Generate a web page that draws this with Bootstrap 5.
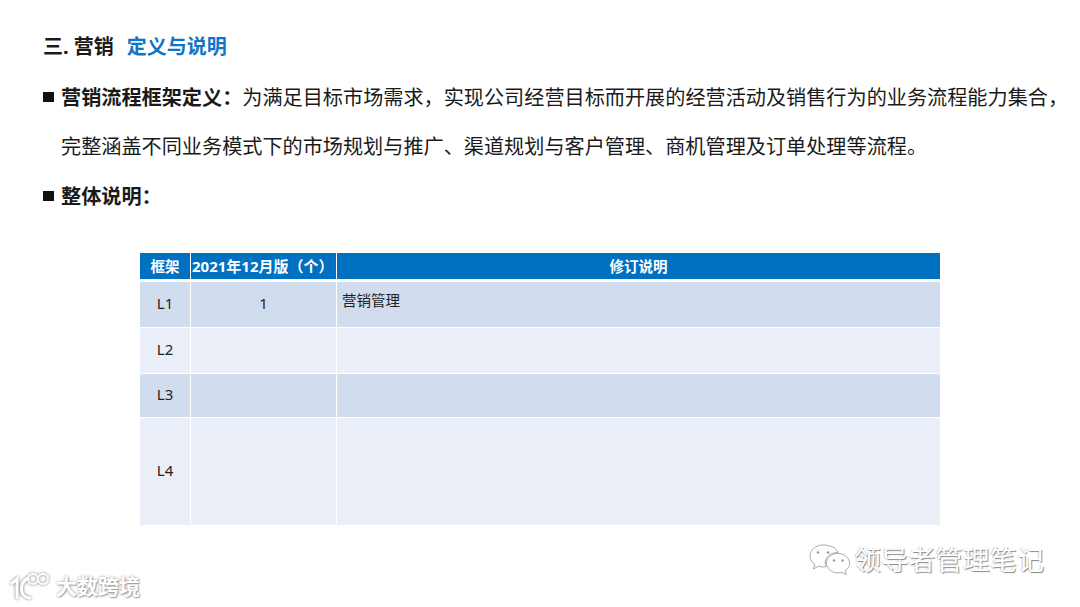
<!DOCTYPE html>
<html lang="zh-CN">
<head>
<meta charset="utf-8">
<title>营销 定义与说明</title>
<link href="https://cdn.jsdelivr.net/npm/bootstrap@5.3.0/dist/css/bootstrap.min.css" rel="stylesheet">
<style>
html,body{width:1080px;height:607px;overflow:hidden;background:#fff}
body{font-family:"Noto Sans","Noto Sans CJK SC",sans-serif;color:#111;position:relative;padding:32px 0 0 43px}
.slide-title{font-size:20px;font-weight:700;line-height:30px;margin:0 0 20px;color:#1a1a1a}
.slide-title .accent{color:#0f75c6;margin-left:13px}
.para{font-size:20.15px;line-height:30px;white-space:nowrap;color:#1a1a1a}
.para-row{gap:7px;margin-bottom:19px}
.sq{width:11px;height:10px;background:#111;margin-top:10px;flex:none}
.indent{padding-left:18px;margin-top:19px;margin-bottom:20px}
.para b{font-weight:700}
.data-wrap{margin:42px 0 0 97px;width:801px}
.data-table{border-collapse:separate;border-spacing:0;table-layout:fixed;width:801px;margin:0;--bs-table-bg:transparent}
.data-table th,.data-table td{border:0;border-right:1px solid #fff;border-bottom:1px solid #fff;padding:0 0 2px;vertical-align:middle;text-align:center;color:#222;font-size:15px}
.data-table thead th{background:#0070c0;color:#fff;height:26px;padding:0;font-size:14.5px;font-weight:700;line-height:26px;white-space:nowrap;border-bottom:3px solid #fff;box-sizing:content-box}
.data-table thead th.c2{font-size:15px;text-align:left;padding-left:1px}
.data-table .odd td{background:#d1ddee}
.data-table .even td{background:#e9eef7}
.data-table td.txt{text-align:left;padding:0 0 8px 5px;font-size:14.5px}
.r1 td{height:46px}.r2 td{height:46px}.r3 td{height:44px}.r4 td{height:108px}
.c1{width:50px}.c2{width:144px}
.mark-wx{position:absolute;left:808px;top:541px;display:flex;align-items:center;gap:2px}
.mark-bd{position:absolute;left:8px;top:571px;display:flex;align-items:center;gap:6px}
.ghost{color:#fff;font-weight:400;white-space:nowrap;text-shadow:1px 1px 1px #8a8a8a,-1px 0 1px #cfcfcf}
.ghost-wx{font-size:26.8px;line-height:38px;letter-spacing:.4px}
.ghost-bd{font-size:21px;line-height:30px;font-weight:700;text-shadow:0 0 3px #999,1px 1px 1px #aaa}
</style>
</head>
<body>
<h1 class="slide-title">三. 营销<span class="accent">定义与说明</span></h1>
<div class="d-flex para para-row mb-0"><span class="sq"></span><span><b>营销流程框架定义：</b>为满足目标市场需求，实现公司经营目标而开展的经营活动及销售行为的业务流程能力集合，</span></div>
<div class="para indent">完整涵盖不同业务模式下的市场规划与推广、渠道规划与客户管理、商机管理及订单处理等流程。</div>
<div class="d-flex para para-row"><span class="sq"></span><b>整体说明：</b></div>
<div class="data-wrap">
<table class="table data-table">
<thead><tr><th class="c1">框架</th><th class="c2">2021年12月版（个）</th><th>修订说明</th></tr></thead>
<tbody>
<tr class="odd r1"><td>L1</td><td>1</td><td class="txt">营销管理</td></tr>
<tr class="even r2"><td>L2</td><td></td><td></td></tr>
<tr class="odd r3"><td>L3</td><td></td><td></td></tr>
<tr class="even r4"><td>L4</td><td></td><td></td></tr>
</tbody>
</table>
</div>
<div class="mark-wx">
<svg width="44" height="36" viewBox="0 0 44 36" fill="#fff" stroke="#aaa" stroke-width="1">
<path d="M15 3C7.500 3 2 8 2 14c0 3.600 2 6.600 5 8.700L5.500 27l5-2.700c1.500.4 3 .6 4.500.6 1 0 2-.1 2.900-.3-.5-1.200-.7-2.400-.7-3.600 0-6 5.500-10.500 12.300-10.500h.6C28.500 6 22.400 3 15 3z"/>
<path d="M30 11.500c-6.500 0-11.500 4.300-11.500 9.700s5 9.700 11.500 9.700c1.400 0 2.700-.2 4-.6l4.300 2.400-1.200-3.800c2.800-1.800 4.500-4.600 4.500-7.700 0-5.400-5.100-9.700-11.600-9.700z"/>
<circle cx="10" cy="10.500" r="1.300" fill="#999" stroke="none"/><circle cx="20" cy="10.500" r="1.300" fill="#999" stroke="none"/>
<circle cx="26" cy="18.500" r="1.200" fill="#999" stroke="none"/><circle cx="34.500" cy="18.500" r="1.200" fill="#999" stroke="none"/>
</svg>
<span class="ghost ghost-wx">领导者管理笔记</span>
</div>
<div class="mark-bd">
<svg width="42" height="30" viewBox="0 0 42 30" fill="none" stroke="#fff" stroke-width="3" style="filter:drop-shadow(0 0 1.500px #777)">
<path d="M3 13 9 8v20"/><path d="M21 7c-6 2-9 8-7 14 1 4 5 6 9 6"/>
<circle cx="25" cy="8" r="5" stroke-width="2"/><circle cx="35" cy="8" r="5" stroke-width="2"/>
</svg>
<span class="ghost ghost-bd">大数跨境</span>
</div>
<script src="https://cdn.jsdelivr.net/npm/bootstrap@5.3.0/dist/js/bootstrap.bundle.min.js"></script>
</body>
</html>
